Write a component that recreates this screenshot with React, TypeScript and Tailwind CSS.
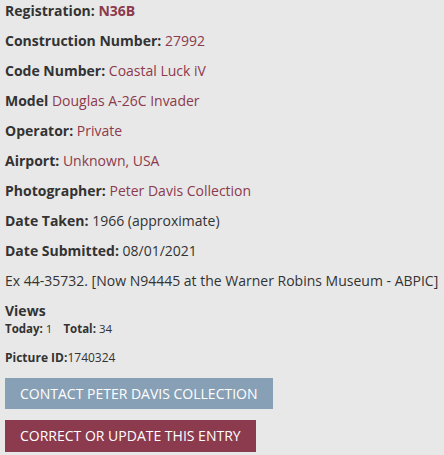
import React from "react";

const rows: { label: string; value: string; bold?: boolean; link?: boolean }[] = [
    { label: "Registration:", value: "N36B", bold: true, link: true },
    { label: "Construction Number:", value: "27992", link: true },
    { label: "Code Number:", value: "Coastal Luck iV", link: true },
    { label: "Model", value: "Douglas A-26C Invader", link: true },
    { label: "Operator:", value: "Private", link: true },
    { label: "Airport:", value: "Unknown, USA", link: true },
    { label: "Photographer:", value: "Peter Davis Collection", link: true },
    { label: "Date Taken:", value: "1966 (approximate)" },
    { label: "Date Submitted:", value: "08/01/2021" },
];

export default function App() {
    return (
        <div className="min-h-screen bg-[#e8e8e8] px-[5px] pt-px text-[#333] font-['Open_Sans',sans-serif]">
            {rows.map((r) => (
                <p key={r.label} className="text-[14px] leading-[20px] mb-[10px]">
                    <span className="font-bold">{r.label}</span>{" "}
                    <span className={`${r.link ? "text-[#8c3a4d]" : ""} ${r.bold ? "font-bold" : ""}`}>{r.value}</span>
                </p>
            ))}
            <p className="text-[14px] leading-[20px] mb-[11px]">
                Ex 44-35732. [Now N94445 at the Warner Robins Museum - ABPIC]
            </p>

            <div className="text-[14px] leading-[18px] font-bold">Views</div>
            <div className="text-[11.5px] leading-[16px] mt-px flex gap-[11px]">
                <span>
                    <span className="font-bold">Today:</span> 1
                </span>
                <span>
                    <span className="font-bold">Total:</span> 34
                </span>
            </div>

            <div className="text-[12px] leading-[16px] mt-[13px]">
                <span className="font-bold">Picture ID:</span>1740324
            </div>

            <div className="flex flex-col items-start gap-[11px] mt-[12px]">
                <button className="bg-[#88a0b6] text-white text-[14px] leading-[20px] px-[15px] pt-[6px] pb-[5px] uppercase">
                    Contact Peter Davis Collection
                </button>
                <button className="bg-[#8c3a4d] text-white text-[14px] leading-[20px] px-[15px] pt-[6px] pb-[6px] uppercase">
                    Correct or Update This Entry
                </button>
            </div>
        </div>
    );
}
